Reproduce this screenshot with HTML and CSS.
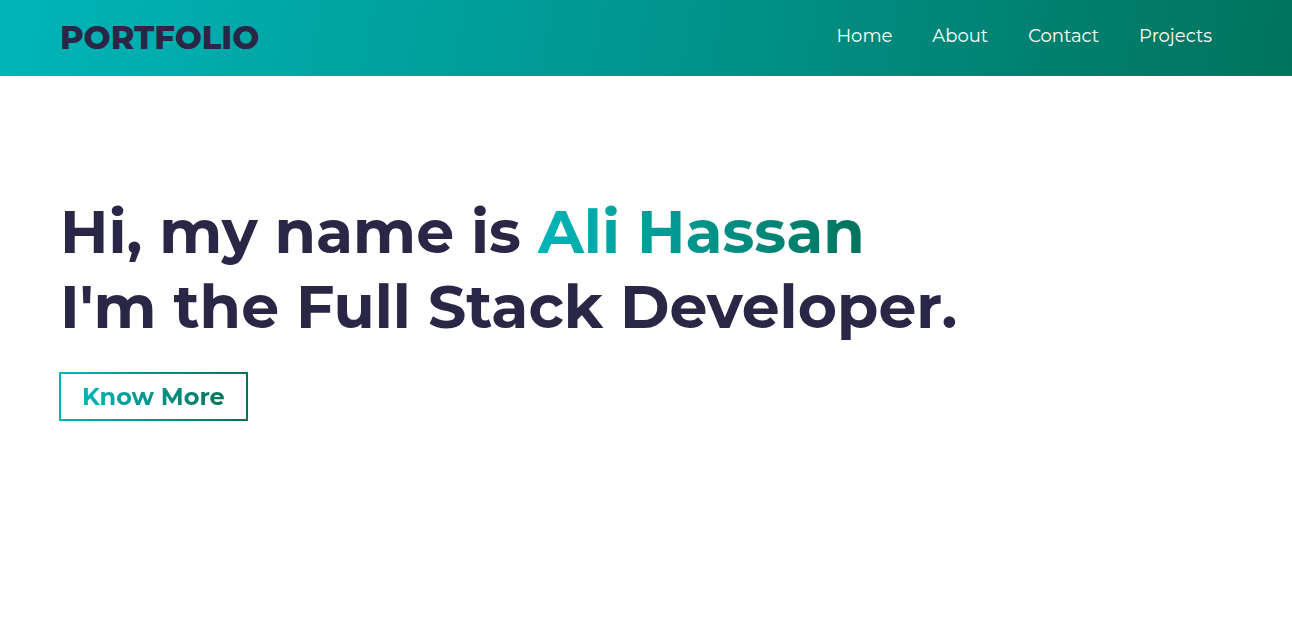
FILE: index.html
```html
<!DOCTYPE html>
<html lang="en">
<head>
<meta charset="utf-8">
<title>Portfolio</title>
<link rel="stylesheet" href="styles.css">
</head>
<body>
<header class="header">
  <div class="logo">PORTFOLIO</div>
  <nav class="nav">
    <a href="#" class="nav-link">Home</a>
    <a href="#" class="nav-link">About</a>
    <a href="#" class="nav-link">Contact</a>
    <a href="#" class="nav-link">Projects</a>
  </nav>
</header>
<main class="hero">
  <h1 class="hero-title">Hi, my name is <span class="grad-text">Ali Hassan</span><br>I'm the Full Stack Developer.</h1>
  <a href="#" class="btn"><span class="grad-text">Know More</span></a>
</main>
</body>
</html>
```
FILE: styles.css
```css
* { box-sizing: border-box; }
body {
  margin: 0;
  font-family: Montserrat, Inter, "Noto Sans", sans-serif;
  background: #fff;
  color: #2a2646;
}
.header {
  height: 76px;
  display: flex;
  align-items: center;
  justify-content: space-between;
  padding: 0 60px;
  background: linear-gradient(100deg, #00b5b8 0%, #00968f 50%, #00735c 100%);
}
.logo {
  font-size: 32px;
  font-weight: 800;
  color: #2a2646;
  padding-bottom: 2px;
}
.nav { display: flex; padding-bottom: 4px; }
.nav-link {
  color: #fff;
  text-decoration: none;
  font-size: 18px;
  margin: 0 20px;
}
.hero {
  padding: 118px 60px 0;
}
.hero-title {
  margin: 0;
  font-size: 60px;
  font-weight: 700;
  line-height: 75px;
  color: #2a2646;
}
.grad-text {
  background: linear-gradient(to right, #00b5b8, #00735c);
  -webkit-background-clip: text;
  background-clip: text;
  color: transparent;
}
.btn {
  display: inline-block;
  margin-top: 28px;
  margin-left: -1px;
  padding: 10px 21px 9px;
  font-size: 24px;
  font-weight: 700;
  text-decoration: none;
  border: 2px solid;
  border-image: linear-gradient(to right, #00b5b8, #00735c) 1;
  line-height: 26px;
}
```
